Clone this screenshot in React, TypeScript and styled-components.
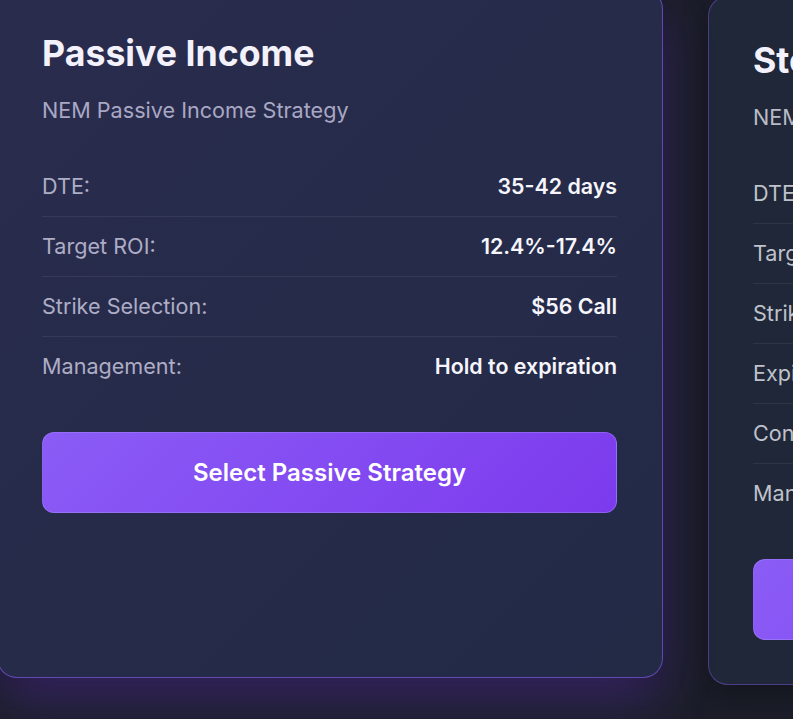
import React from "react";
import styled, { createGlobalStyle } from "styled-components";

const Global = createGlobalStyle`
  html, body { margin: 0; padding: 0; }
  body {
    background: #1b1e29;
    font-family: Inter, "Noto Sans", sans-serif;
    overflow: hidden;
    width: 793px;
    height: 719px;
  }
`;

const Track = styled.div`
  display: flex;
  align-items: stretch;
  gap: 45px;
  margin-top: -4px;
  margin-left: -3px;
  width: max-content;
`;

const Card = styled.div<{ $active?: boolean }>`
  box-sizing: border-box;
  width: 666px;
  flex: none;
  display: flex;
  flex-direction: column;
  padding: 44px 45px 44px 44px;
  border-radius: 20px;
  border: 1px solid ${(p) => (p.$active ? "rgba(139, 92, 246, 0.6)" : "rgba(139, 92, 246, 0.42)")};
  background: ${(p) =>
    p.$active
      ? "linear-gradient(135deg, #2a2c4d 0%, #262b4a 45%, #222a46 100%)"
      : "#1f2739"};
  box-shadow: ${(p) =>
    p.$active
      ? "0 22px 50px rgba(124, 58, 237, 0.3), 0 8px 24px rgba(0,0,0,0.25)"
      : "0 10px 30px rgba(0,0,0,0.3)"};
  transform: ${(p) => (p.$active ? "translateY(-7px)" : "none")};
`;

const Title = styled.h2`
  margin: 0 0 24px;
  font-size: 35.7px;
  line-height: 38px;
  font-weight: 700;
  color: #f3f1fb;
  white-space: nowrap;
`;

const Subtitle = styled.p<{ $active?: boolean }>`
  margin: 0 0 33px;
  font-size: 21.6px;
  line-height: 28px;
  color: ${(p) => (p.$active ? "#a9a8c4" : "#b9bcc6")};
  white-space: nowrap;
`;

const Rows = styled.div`
  display: flex;
  flex-direction: column;
`;

const Row = styled.div`
  display: flex;
  justify-content: space-between;
  align-items: center;
  padding: 18px 0;
  line-height: 23px;
  border-bottom: 1px solid rgba(255, 255, 255, 0.07);
  &:last-child { border-bottom: none; }
  white-space: nowrap;
`;

const Label = styled.span<{ $active?: boolean }>`
  font-size: 21.6px;
  color: ${(p) => (p.$active ? "#aeadc6" : "#bfc2ca")};
`;

const Value = styled.span`
  font-size: 21.4px;
  font-weight: 600;
  color: #f6f5fb;
`;

const Button = styled.button`
  margin-top: 36px;
  height: 81px;
  border-radius: 12px;
  border: 1px solid rgba(167, 139, 250, 0.45);
  background: linear-gradient(135deg, #8b5cf6 0%, #7c3aed 100%);
  color: #ffffff;
  font-family: Inter, "Noto Sans", sans-serif;
  font-size: 24px;
  font-weight: 600;
  cursor: pointer;
  white-space: nowrap;
`;

type Strategy = {
  title: string;
  subtitle: string;
  rows: [string, string][];
  button: string;
};

const strategies: Strategy[] = [
  {
    title: "Passive Income",
    subtitle: "NEM Passive Income Strategy",
    rows: [
      ["DTE:", "35-42 days"],
      ["Target ROI:", "12.4%-17.4%"],
      ["Strike Selection:", "$56 Call"],
      ["Management:", "Hold to expiration"],
    ],
    button: "Select Passive Strategy",
  },
  {
    title: "Stock Acquisition",
    subtitle: "NEM Stock Acquisition Strategy",
    rows: [
      ["DTE:", "21-28 days"],
      ["Target ROI:", "8.2%-11.6%"],
      ["Strike Selection:", "$52 Put"],
      ["Expiration:", "Monthly"],
      ["Contracts:", "2"],
      ["Management:", "Roll if tested"],
    ],
    button: "Select Acquisition Strategy",
  },
];

export default function App() {
  return (
    <>
      <Global />
      <Track>
        {strategies.map((s, i) => (
          <Card key={s.title} $active={i === 0}>
            <Title>{s.title}</Title>
            <Subtitle $active={i === 0}>{s.subtitle}</Subtitle>
            <Rows>
              {s.rows.map(([l, v]) => (
                <Row key={l}>
                  <Label $active={i === 0}>{l}</Label>
                  <Value>{v}</Value>
                </Row>
              ))}
            </Rows>
            <Button>{s.button}</Button>
          </Card>
        ))}
      </Track>
    </>
  );
}
